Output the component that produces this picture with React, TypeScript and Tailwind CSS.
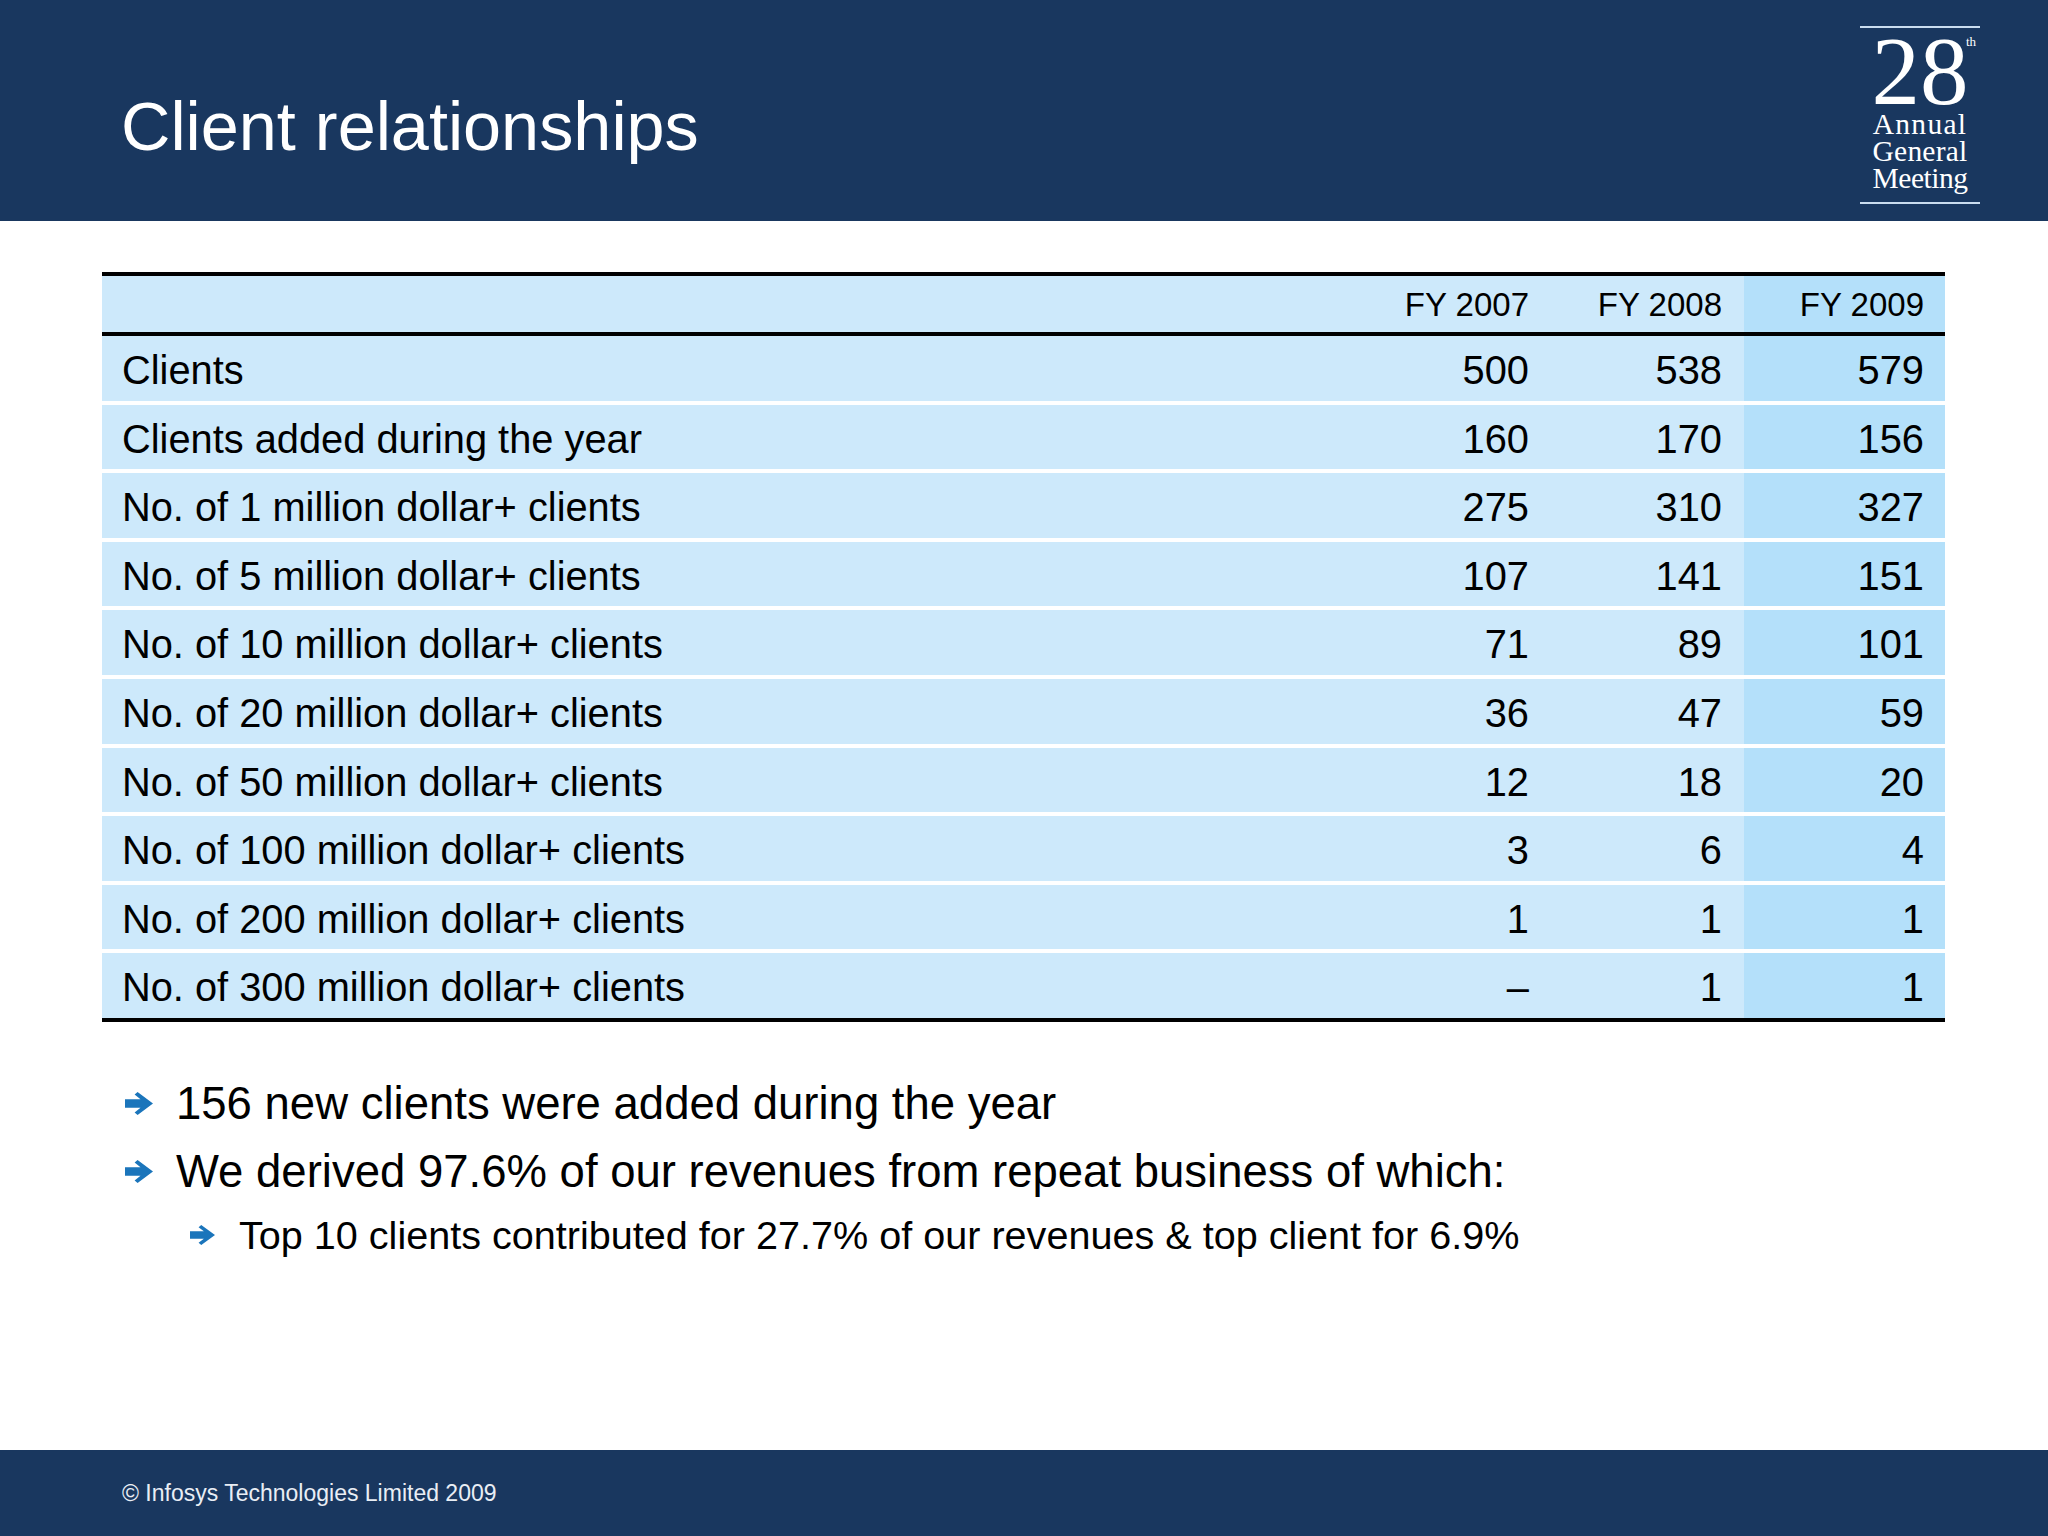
import React from "react";

const rows: [string, string, string, string][] = [
  ["Clients", "500", "538", "579"],
  ["Clients added during the year", "160", "170", "156"],
  ["No. of 1 million dollar+ clients", "275", "310", "327"],
  ["No. of 5 million dollar+ clients", "107", "141", "151"],
  ["No. of 10 million dollar+ clients", "71", "89", "101"],
  ["No. of 20 million dollar+ clients", "36", "47", "59"],
  ["No. of 50 million dollar+ clients", "12", "18", "20"],
  ["No. of 100 million dollar+ clients", "3", "6", "4"],
  ["No. of 200 million dollar+ clients", "1", "1", "1"],
  ["No. of 300 million dollar+ clients", "–", "1", "1"],
];

function Arrow({ w, h }: { w: number; h: number }) {
  return (
    <svg width={w} height={h} viewBox="0 0 28 22" preserveAspectRatio="none" className="shrink-0">
      <path d="M0 7 H15.5 L9.6 2.4 L12.6 0 L28 11 L12.6 22 L9.6 19.6 L15.5 15 H0 Z" fill="#1b75bb" />
    </svg>
  );
}

export default function App() {
  return (
    <div className="w-[2048px] h-[1536px] bg-white flex flex-col font-['Liberation_Sans',Arial,sans-serif] text-black overflow-hidden">
      {/* Header */}
      <div className="h-[221px] shrink-0 bg-[#19375f] flex justify-between items-start">
        <div className="pl-[121px] pt-[92px] text-white text-[68.4px] leading-[68px] whitespace-nowrap">
          Client relationships
        </div>
        <div className="mt-[26px] mr-[68px] w-[120px] flex flex-col items-stretch text-white font-['Liberation_Serif','Times_New_Roman',serif] text-center">
          <div className="h-[2px] bg-[#c9dcef]" />
          <div className="relative mt-[5px] text-[97px] leading-[78px]">
            28
            <span className="absolute left-[106px] top-[2px] text-[13px] leading-[13px]">th</span>
          </div>
          <div className="text-[29.5px] leading-[27px] tracking-[1.3px]">Annual</div>
          <div className="text-[29.5px] leading-[27px] tracking-[0.2px]">General</div>
          <div className="text-[29.5px] leading-[27px] tracking-[-0.5px]">Meeting</div>
          <div className="mt-[10px] h-[2px] bg-[#c9dcef]" />
        </div>
      </div>

      {/* Table */}
      <div className="mt-[51px] ml-[102px] w-[1843px] flex flex-col">
        <div className="h-[4px] bg-black" />
        <div className="grid grid-cols-[1fr_194px_194px_201px] h-[56px] text-[33px] leading-[56px]">
          <div className="bg-[#cde9fb]" />
          <div className="bg-[#cde9fb] text-right pr-[21px] pt-[1px]">FY 2007</div>
          <div className="bg-[#cde9fb] text-right pr-[22px] pt-[1px]">FY 2008</div>
          <div className="bg-[#b4e0fa] text-right pr-[21px] pt-[1px]">FY 2009</div>
        </div>
        <div className="h-[4px] bg-black" />
        {rows.map((r, i) => (
          <div
            key={i}
            className={
              i === 0
                ? "grid grid-cols-[1fr_194px_194px_201px] h-[64.6px] text-[39.8px] leading-[59.6px]"
                : "grid grid-cols-[1fr_194px_194px_201px] h-[68.6px] border-t-4 border-white text-[39.8px] leading-[59.6px]"
            }
          >
            <div className="bg-[#cde9fb] pl-[20px] pt-[5px] whitespace-nowrap">{r[0]}</div>
            <div className="bg-[#cde9fb] text-right pr-[21px] pt-[5px]">{r[1]}</div>
            <div className="bg-[#cde9fb] text-right pr-[22px] pt-[5px]">{r[2]}</div>
            <div className="bg-[#b4e0fa] text-right pr-[21px] pt-[5px]">{r[3]}</div>
          </div>
        ))}
        <div className="h-[4px] bg-black" />
      </div>

      {/* Bullets */}
      <div className="mt-[47px] flex flex-col">
        <div className="flex items-center h-[69px] pl-[125px] gap-[23px] text-[45.5px] leading-[69px] whitespace-nowrap">
          <Arrow w={28} h={23} />
          <span>156 new clients were added during the year</span>
        </div>
        <div className="flex items-center h-[68px] pl-[125px] gap-[23px] text-[45.5px] leading-[68px] whitespace-nowrap">
          <Arrow w={28} h={23} />
          <span>We derived 97.6% of our revenues from repeat business of which:</span>
        </div>
        <div className="flex items-center h-[58px] pl-[190px] gap-[24px] text-[39.6px] leading-[58px] whitespace-nowrap">
          <Arrow w={25} h={20} />
          <span>Top 10 clients contributed for 27.7% of our revenues &amp; top client for 6.9%</span>
        </div>
      </div>

      {/* Footer */}
      <div className="mt-auto h-[86px] shrink-0 bg-[#19375f] flex items-center pl-[122px] text-[23px] text-[#e9eef5]">
        © Infosys Technologies Limited 2009
      </div>
    </div>
  );
}
